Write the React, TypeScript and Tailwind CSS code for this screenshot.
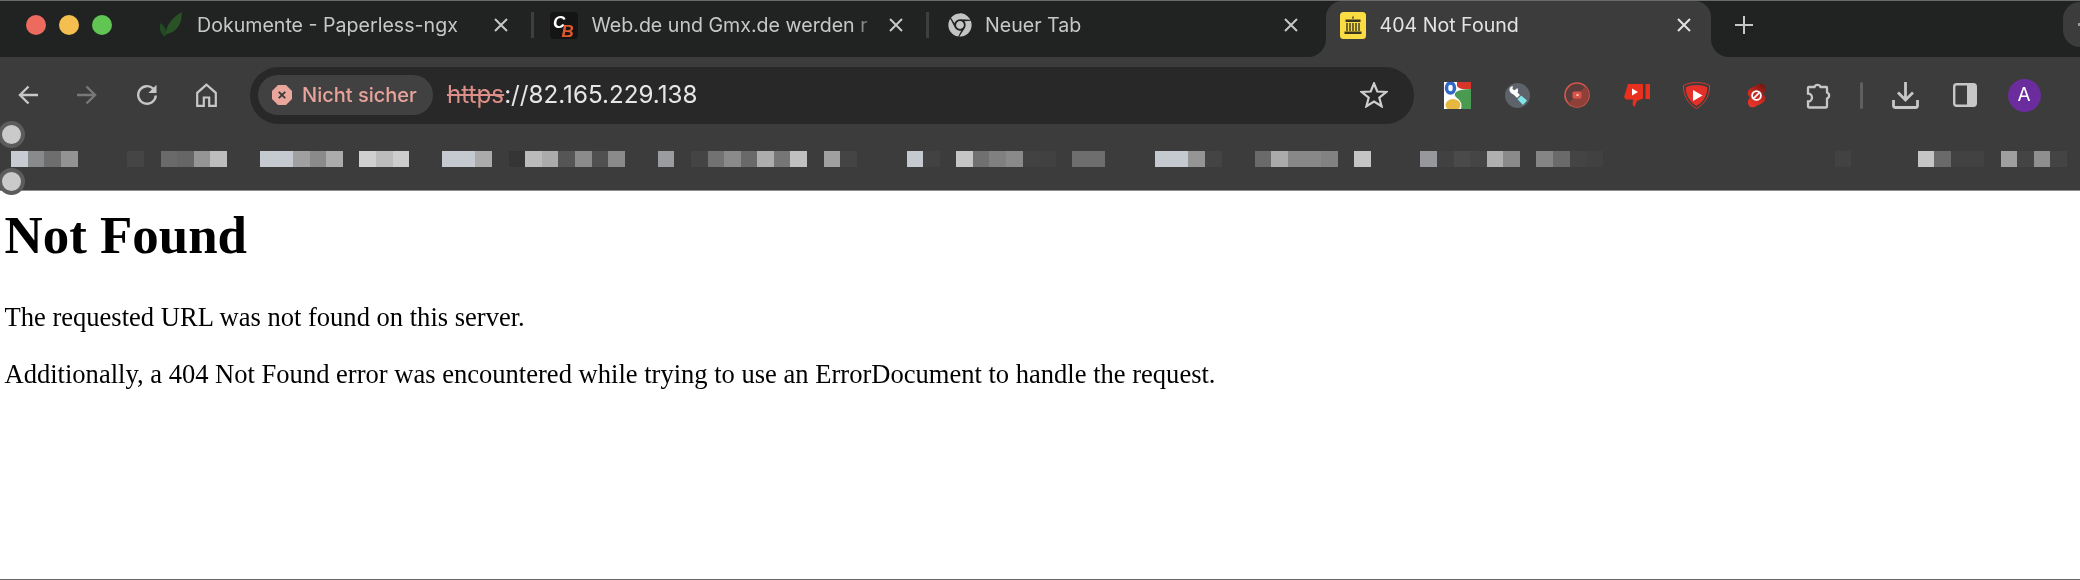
import React from "react";
import { FaChrome } from "react-icons/fa";

const CELLS: string[] = [
  "#c8ccd2","#888a8c","#6e6e6e","#939393","","","","#454545","","#6a6a6a","#666666","#959595","#bdbdbd","","",
  "#c5c9d0","#c5c9d0","#a0a0a0","#8a8a8a","#acacac","","#d0d0d0","#bcbcbc","#cdcdcd","","","#c5c9d0","#c5c9d0","#ababab","",
  "#353535","#bbbbbb","#ababab","#555555","#8b8b8b","#505050","#8a8a8a","","","#9a9ca0","","#444444","#727272","#8a8a8a","#696969",
  "#adadad","#767676","#c0c0c0","","#a0a0a0","#444444","","","","#c5c9d0","#424242","","#c5c5c5","#707070","#808080",
  "#8a8a8a","#424242","#414141","","#6e6e6e","#6e6e6e","","","","#c5c9d0","#c5c9d0","#959595","#444444","","",
  "#6a6a6a","#ababab","#888888","#888888","#828282","","#c5c5c5","","","","#96989c","#414141","#4a4a4a","#454545","#b0b0b0",
  "#8a8a8a","","#858585","#6a6a6a","#444444","#414141","","","","","","","","","","","","","","",
  "#424242","","","","","#c5c5c5","#6a6a6a","#424242","#424242","","#9f9f9f","#444444","#8f8f8f","#444444",
];

function CloseX({ color = "#c7c7c7" }: { color?: string }) {
  return (
    <svg width="14" height="14" viewBox="0 0 14 14" className="shrink-0">
      <path d="M1 1 13 13M13 1 1 13" stroke={color} strokeWidth="2" fill="none" />
    </svg>
  );
}

function Leaf() {
  return (
    <svg width="24" height="26" viewBox="0 0 24 26" className="shrink-0">
      <path d="M8 24C7 14 14 6 23.5 0C24.5 10 20 20 8.5 22Z" fill="#2a5227" />
      <path d="M7 25C1.5 21 1 15 2.5 11C7 14 9.5 19 7 25Z" fill="#214a25" />
    </svg>
  );
}

function CbIcon() {
  return (
    <svg width="28" height="27" viewBox="0 0 28 27" className="shrink-0">
      <rect width="28" height="27" rx="4" fill="#141414" />
      <text x="3" y="16" fontFamily="Liberation Sans" fontWeight="700" fontStyle="italic" fontSize="17" fill="#ffffff">C</text>
      <text x="11.5" y="25" fontFamily="Liberation Sans" fontWeight="700" fontStyle="italic" fontSize="17" fill="#e0592a">B</text>
    </svg>
  );
}

function GateIcon() {
  return (
    <svg width="26" height="27" viewBox="0 0 26 27" className="shrink-0">
      <rect width="26" height="27" rx="3.5" fill="#fadc43" />
      <path d="M13 3.5 14 6.5H12Z M5.5 7.5H20.5V10H5.5Z M4.5 19.5H21.5V22H4.5Z" fill="#3a3520" />
      <path d="M7 11V19M10 11V19M13 11V19M16 11V19M19 11V19" stroke="#3a3520" strokeWidth="1.4" />
    </svg>
  );
}

function Tab({
  icon,
  title,
  className,
  textClass = "text-[#c7c7c7]",
  closeColor,
  fade = false,
}: {
  icon: React.ReactNode;
  title: string;
  className: string;
  textClass?: string;
  closeColor?: string;
  fade?: boolean;
}) {
  return (
    <div className={`flex items-center shrink-0 ${className}`}>
      {icon}
      <span
        className={`flex-1 min-w-0 whitespace-nowrap text-[19.6px] leading-[26px] ${textClass} ${
          fade ? "[mask-image:linear-gradient(to_right,black_93%,transparent_100%)]" : ""
        }`}
      >
        {title}
      </span>
      <CloseX color={closeColor} />
    </div>
  );
}

function Separator() {
  return <div className="w-[3px] h-[26px] bg-[#3d3f3e] shrink-0" />;
}

function TabStrip() {
  return (
    <div className="flex h-[56px] bg-[#3c3c3c]">
      <div className="flex items-center w-[1326px] shrink-0 bg-[#202322] rounded-br-[18px] pb-[8px]">
        <div className="flex items-center gap-[13px] pl-[26px] w-[158px] shrink-0">
          <div className="w-[20px] h-[20px] rounded-full bg-[#ec6a5e]" />
          <div className="w-[20px] h-[20px] rounded-full bg-[#f4bf4f]" />
          <div className="w-[20px] h-[20px] rounded-full bg-[#61c554]" />
        </div>
        <Tab icon={<Leaf />} title="Dokumente - Paperless-ngx" className="w-[373px] gap-[15px] pr-[23px]" />
        <Separator />
        <Tab icon={<CbIcon />} title="Web.de und Gmx.de werden r" fade className="w-[392px] pl-[16px] gap-[13.5px] pr-[23.5px]" />
        <Separator />
        <Tab icon={<FaChrome size={24} color="#c4c4c4" className="shrink-0" />} title="Neuer Tab" className="w-[395px] pl-[19px] gap-[13px] pr-[26px]" />
      </div>
      <div className="w-[384.5px] shrink-0 bg-[#202322]">
        <div className="h-full bg-[#3c3c3c] rounded-t-[16px] pb-[8px] flex">
          <Tab
            icon={<GateIcon />}
            title="404 Not Found"
            textClass="text-[#e3e3e3]"
            closeColor="#e3e3e3"
            className="w-full pl-[14px] gap-[13.5px] pr-[19.5px]"
          />
        </div>
      </div>
      <div className="flex-1 flex items-start bg-[#202322] rounded-bl-[18px]">
        <svg width="18" height="18" viewBox="0 0 18 18" className="ml-[24px] mt-[14.5px] shrink-0">
          <path d="M9 0V18M0 9H18" stroke="#c7c7c7" strokeWidth="2" />
        </svg>
        <div className="ml-auto mt-[1px] w-[17px] h-[45px] bg-[#3c3c3c] rounded-l-[22px] flex items-center justify-end">
          <div className="w-[2px] h-[3px] bg-[#9a9a9a]" />
        </div>
      </div>
    </div>
  );
}

const ICON = "#c7c7c7";

function NavIcons() {
  return (
    <>
      <svg width="20" height="20" viewBox="0 0 20 20" className="ml-[18px] shrink-0">
        <path d="M20 10H2.5M10.5 1.5 2 10l8.5 8.5" stroke={ICON} strokeWidth="2.4" fill="none" />
      </svg>
      <svg width="20" height="20" viewBox="0 0 20 20" className="ml-[39px] shrink-0">
        <path d="M0 10H17.5M9.5 1.5 18 10l-8.5 8.5" stroke="#787878" strokeWidth="2.4" fill="none" />
      </svg>
      <svg width="22" height="22" viewBox="0 0 22 22" className="ml-[39px] shrink-0">
        <path d="M19.8 11.5a8.8 8.8 0 1 1-2.6-6.8" stroke={ICON} strokeWidth="2.4" fill="none" />
        <path d="M20.5 0.8V9H12.3Z" fill={ICON} />
      </svg>
      <svg width="21" height="24" viewBox="0 0 21 24" className="ml-[38px] shrink-0">
        <path d="M10.5 1.6 1.2 9.8V22.8H7.8V14.5H13.2V22.8H19.8V9.8Z" stroke={ICON} strokeWidth="2.2" fill="none" />
      </svg>
    </>
  );
}

function AddressBar() {
  return (
    <div className="ml-[33px] w-[1164px] h-[57px] shrink-0 rounded-full bg-[#282828] flex items-center pl-[8px] pr-[26px]">
      <div className="h-[40px] w-[175px] shrink-0 rounded-full bg-[#414141] flex items-center pl-[13.5px] gap-[10.5px]">
        <svg width="20" height="20" viewBox="0 0 20 20" className="shrink-0">
          <polygon points="6,0 14,0 20,6 20,14 14,20 6,20 0,14 0,6" fill="#eaa59d" />
          <path d="M6.8 6.8 13.2 13.2M13.2 6.8 6.8 13.2" stroke="#3a3a3a" strokeWidth="1.9" />
        </svg>
        <span className="text-[20px] font-medium text-[#e8a39b] whitespace-nowrap">Nicht sicher</span>
      </div>
      <div className="ml-[14px] flex-1 text-[24.2px] whitespace-nowrap text-[#e6e6e6]">
        <span className="line-through text-[#dc8f88]">https</span>
        <span>://82.165.229.138</span>
      </div>
      <svg width="28" height="26" viewBox="0 0 28 26" className="shrink-0">
        <polygon
          points="14,1.5 17.3,9.5 26.2,10 19.3,15.7 21.6,24.3 14,19.6 6.4,24.3 8.7,15.7 1.8,10 10.7,9.5"
          fill="none"
          stroke="#cfcfcf"
          strokeWidth="2.2"
        />
      </svg>
    </div>
  );
}

function ExtensionIcons() {
  return (
    <>
      <svg width="27" height="27" viewBox="0 0 27 27" className="ml-[30px] shrink-0">
        <rect width="27" height="27" fill="#ffffff" />
        <path d="M13 0H27V7H19Q15 7 13 4Z" fill="#d8352a" />
        <path d="M27 7V27H17Q19 20 13 16Q9 13 12 10Q16 7 27 7Z" fill="#4a9a52" />
        <ellipse cx="6.5" cy="6" rx="4" ry="5" fill="none" stroke="#2f68c8" strokeWidth="3.5" />
        <ellipse cx="9" cy="23" rx="7.5" ry="6" fill="#e7b83f" />
        <rect x="0" y="27" width="27" height="3" fill="#3c3c3c" />
      </svg>
      <svg width="25" height="25" viewBox="0 0 25 25" className="ml-[33.5px] shrink-0">
        <circle cx="12.5" cy="12.5" r="12.5" fill="#5e626a" />
        <path d="M13.5 13.5 9 9" stroke="#ffffff" strokeWidth="4" />
        <path d="M5 4.5a4.6 4.6 0 0 0 2 6.3 4.6 4.6 0 0 0 5-.6 4.6 4.6 0 0 0 .4-5.2L9.6 7.2 7.4 5.9 8 3.3A4 4 0 0 0 5 4.5Z" fill="#ffffff" />
        <path d="M12.5 16.2 16.2 12.5 22 17.5 18 22Z" fill="#80e6ea" />
      </svg>
      <svg width="26" height="26" viewBox="0 0 26 26" className="ml-[34px] shrink-0">
        <circle cx="13" cy="13" r="12" fill="#5a3d3a" stroke="#d9584d" strokeWidth="1.6" />
        <path d="M21.5 4.5A12 12 0 0 1 4.5 21.5Z" fill="#8f4038" />
        <rect x="8.5" y="9.5" width="9" height="7" rx="1.5" fill="#d9534a" />
        <rect x="12.5" y="12" width="2" height="2" fill="#f2c9c5" />
      </svg>
      <svg width="26" height="24" viewBox="0 0 26 24" className="ml-[34px] shrink-0">
        <rect x="21.5" y="1" width="4.5" height="15" fill="#e9301f" />
        <path d="M4 1H19V15.5L13 18 10.5 24 8.5 21.5 9 16.5H2L0 14Z" fill="#e9301f" />
        <path d="M8 5.5 14 9 8 12.5Z" fill="#ffffff" />
      </svg>
      <svg width="27" height="27" viewBox="0 0 27 27" className="ml-[33px] shrink-0">
        <path d="M13.5.5C18 .5 23 1.5 26.5 3.5 27 13 22 22 13.5 26.5 5 22 0 13 .5 3.5 4 1.5 9 .5 13.5.5Z" fill="none" stroke="#d8382a" strokeWidth="1" />
        <path d="M13.5 3C17.5 3 21 3.8 24.2 5.3 24.5 13 20.5 20 13.5 24 6.5 20 2.5 13 2.8 5.3 6 3.8 9.5 3 13.5 3Z" fill="#e5302a" />
        <path d="M10 8 19.5 13.5 10 19Z" fill="#ffffff" />
      </svg>
      <svg width="19" height="25" viewBox="0 0 19 25" className="ml-[37px] shrink-0">
        <defs>
          <linearGradient id="shorts" x1="0.8" y1="0" x2="0.2" y2="1">
            <stop offset="0" stopColor="#741612" />
            <stop offset="0.55" stopColor="#cc2a20" />
            <stop offset="1" stopColor="#e8362a" />
          </linearGradient>
        </defs>
        <path
          d="M11.5 1Q17.5 -.5 18.5 5 18.8 9 15.5 10.8 18.8 12.5 18.5 16 18 18.5 15.5 20L7.5 24Q2.5 25.5 1 20.5.5 16.5 3.5 14.5.5 13 .8 9 1 6.8 3 5.5Z"
          fill="url(#shorts)"
        />
        <circle cx="9.5" cy="12.5" r="4.4" fill="#c92a20" stroke="#ffffff" strokeWidth="1.8" />
        <path d="M6.6 15.4 12.4 9.6" stroke="#ffffff" strokeWidth="1.6" />
      </svg>
      <svg width="27" height="27" viewBox="0 0 27 27" className="ml-[38px] shrink-0">
        <path
          d="M5 5H10.5A3.2 3.2 0 0 1 16.5 5H22.5Q23 5 23 5.5V10.5A3.2 3.2 0 0 1 23 16.5V24.5Q23 25.5 22 25.5H5Q4 25.5 4 24.5V19.5A4 4 0 0 0 4 11.5V6Q4 5 5 5Z"
          fill="none"
          stroke={ICON}
          strokeWidth="2.3"
        />
      </svg>
      <div className="ml-[29px] w-[3px] h-[27px] rounded-full bg-[#5f5f5f] shrink-0" />
      <svg width="27" height="27" viewBox="0 0 27 27" className="ml-[29px] shrink-0">
        <path d="M13.5 0V17.5M6 10.5 13.5 18 21 10.5" stroke={ICON} strokeWidth="2.8" fill="none" />
        <path d="M1.5 18V23.5Q1.5 25.5 3.5 25.5H23.5Q25.5 25.5 25.5 23.5V18" stroke={ICON} strokeWidth="2.8" fill="none" />
      </svg>
      <svg width="24" height="24" viewBox="0 0 24 24" className="ml-[34px] shrink-0">
        <rect x="1.2" y="1.2" width="21.6" height="21.6" rx="2.5" fill="none" stroke={ICON} strokeWidth="2.4" />
        <path d="M14 1H21.5Q23 1 23 2.5V21.5Q23 23 21.5 23H14Z" fill={ICON} />
      </svg>
      <div className="ml-[31px] w-[33px] h-[33px] rounded-full bg-[#6b2c9e] flex items-center justify-center shrink-0 text-[19px] text-white">
        A
      </div>
    </>
  );
}

function Handle({ className }: { className: string }) {
  return (
    <div className={`absolute left-[-2px] w-[27px] h-[27px] rounded-full border-[4px] border-[#5c5c5c] bg-[#cacaca] z-10 ${className}`} />
  );
}

function Toolbar() {
  return (
    <div className="relative h-[134px] shrink-0 bg-[#3c3c3c] border-b border-[#8c8c8c]">
      <div className="flex items-center h-[57px] mt-[9.5px]">
        <NavIcons />
        <AddressBar />
        <ExtensionIcons />
      </div>
      <div className="flex h-[16px] mt-[27.5px] pl-[11.3px]">
        {CELLS.map((c, i) => (
          <div key={i} className="w-[16.58px] h-full shrink-0" style={{ backgroundColor: c || "transparent" }} />
        ))}
      </div>
      <Handle className="top-[63.5px]" />
      <Handle className="top-[110.5px]" />
    </div>
  );
}

export default function App() {
  return (
    <div className="w-[2080px] h-[580px] overflow-hidden flex flex-col bg-white border-t border-[#6a6a6a] blur-[0.4px] [font-family:Inter,sans-serif]">
      <TabStrip />
      <Toolbar />
      <main className="flex-1 pl-[4.5px] border-b border-[#666666] text-black [font-family:'Liberation_Serif',serif]">
        <h1 className="mt-[14px] text-[52.9px] leading-[60px] font-bold">Not Found</h1>
        <p className="mt-[37px] text-[26.55px] leading-[30px]">The requested URL was not found on this server.</p>
        <p className="mt-[27px] text-[26.55px] leading-[30px]">
          Additionally, a 404 Not Found error was encountered while trying to use an ErrorDocument to handle the request.
        </p>
      </main>
    </div>
  );
}
